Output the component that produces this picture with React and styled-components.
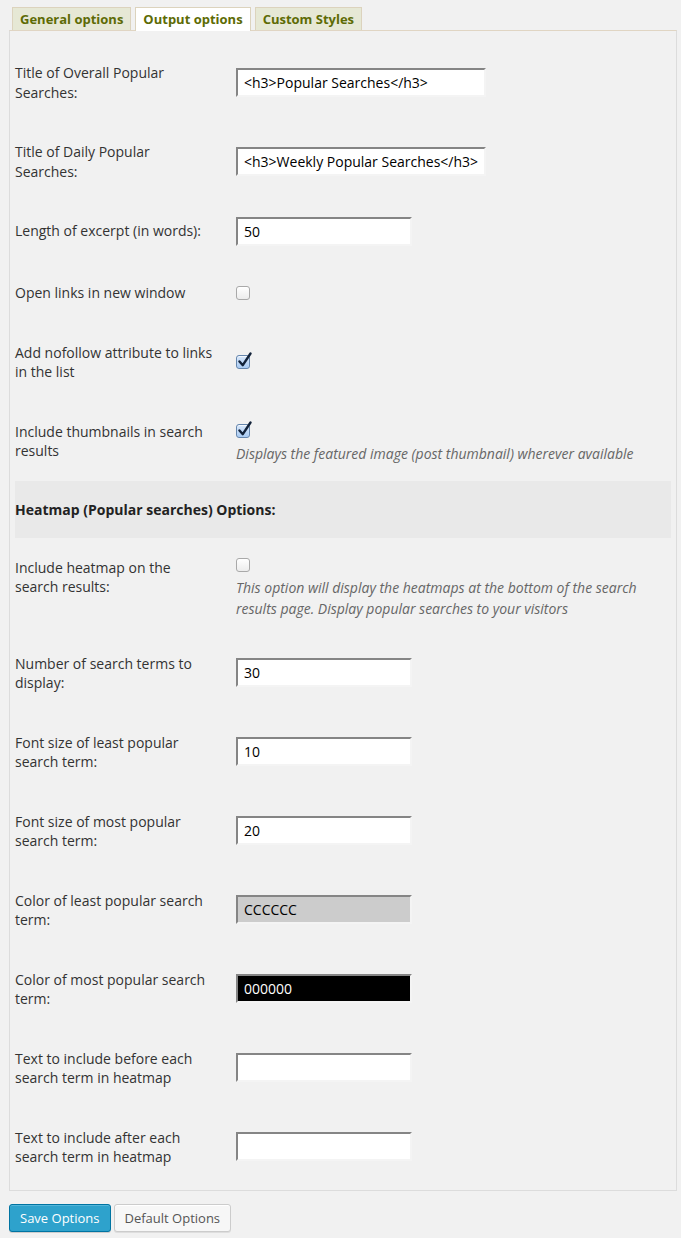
import React from 'react';
import styled, {createGlobalStyle} from 'styled-components';

const GlobalStyle = createGlobalStyle`
  body {
    margin: 0;
    background: #f1f1f1;
    font-family: "Open Sans", "Liberation Sans", sans-serif;
    font-size: 14px;
    color: #333;
  }
`;

const Page = styled.div`
  padding: 7px 4px 6px 9px;
`;

const TabBar = styled.div`
  display: flex;
  gap: 4px;
  padding-left: 3px;
  height: 23px;
  position: relative;
  z-index: 1;
`;

const Tab = styled.div`
  height: ${({$active}) => ($active ? 23 : 22)}px;
  line-height: 22px;
  padding: 0 7px;
  border: 1px solid #dcd3bd;
  border-bottom: none;
  background: ${({$active}) => ($active ? '#fff' : '#e6e8d5')};
  color: #5d6b05;
  font-weight: 700;
  font-size: 13px;
  white-space: nowrap;
`;

const Panel = styled.div`
  border: 1px solid #dcdcdc;
  border-top-color: #e0d5c3;
  padding: 12px 5px 3px;
  background: #f1f1f1;
`;

const FormTable = styled.table`
  width: 100%;
  border-collapse: collapse;
`;

const Label = styled.th`
  width: 200px;
  padding: 20px 10px 20px 0;
  text-align: left;
  vertical-align: top;
  font-weight: 400;
  font-size: 14px;
  line-height: 19.5px;
  color: #333;
`;

const Field = styled.td`
  padding: 15px 10px 15px 11px;
  vertical-align: middle;
`;

const SectionHead = styled.th`
  padding: 20px 0;
  text-align: left;
  background: #e9e9e9;
  font-weight: 700;
  font-size: 14px;
  line-height: 17px;
  color: #222;
`;

const TextInput = styled.input`
  display: block;
  box-sizing: border-box;
  width: ${({$wide}) => ($wide ? 250 : 176)}px;
  height: 29px;
  margin: 1px 0 2px;
  padding: 0 6px;
  border: 2px solid #f4f4f4;
  border-top-color: #858585;
  border-left-color: #858585;
  background: ${({$bg}) => $bg || '#fff'};
  color: ${({$fg}) => $fg || '#000'};
  font-family: "Open Sans", "Liberation Sans", sans-serif;
  font-size: 14px;
  outline: none;
`;

const CheckLine = styled.div`
  height: 24px;
  display: flex;
  align-items: center;
`;

const Box = styled.span`
  position: relative;
  display: inline-block;
  box-sizing: border-box;
  width: 14px;
  height: 14px;
  border-radius: 3px;
  border: 1px solid ${({$checked}) => ($checked ? '#6586ad' : '#a9a9a9')};
  background: ${({$checked}) =>
    $checked
      ? 'linear-gradient(#d6e6fa, #a9cbf3)'
      : 'linear-gradient(#ffffff, #ececec)'};
  box-shadow: inset 0 1px 1px rgba(255, 255, 255, 0.8);
`;

const Tick = styled.svg`
  position: absolute;
  left: 0;
  top: -4px;
  width: 15px;
  height: 16px;
`;

const Desc = styled.div`
  font-style: italic;
  color: #666;
  font-size: 14px;
  line-height: 21px;
  max-width: 420px;
`;

const Actions = styled.div`
  display: flex;
  gap: 3px;
  margin-top: 13px;
`;

const Button = styled.button`
  height: 28px;
  padding: 0 10px;
  border-radius: 3px;
  font-family: "Open Sans", "Liberation Sans", sans-serif;
  font-size: 13px;
  line-height: 26px;
  cursor: pointer;
  border: 1px solid ${({$primary}) => ($primary ? '#0074a2' : '#cccccc')};
  background: ${({$primary}) => ($primary ? '#2ea2cc' : '#f7f7f7')};
  color: ${({$primary}) => ($primary ? '#fff' : '#555')};
  box-shadow: ${({$primary}) =>
    $primary
      ? 'inset 0 1px 0 rgba(120, 200, 230, 0.5), 0 1px 0 rgba(0, 0, 0, 0.15)'
      : 'inset 0 1px 0 #fff, 0 1px 0 rgba(0, 0, 0, 0.08)'};
`;

const Checkbox = ({checked}) => (
  <CheckLine>
    <Box $checked={checked}>
      {checked && (
        <Tick viewBox="0 0 15 16">
          <path
            d="M2.5 9.5 L5.8 13.2 L13.5 1.5"
            fill="none"
            stroke="#13233a"
            strokeWidth="2.4"
            strokeLinecap="round"
            strokeLinejoin="round"
          />
        </Tick>
      )}
    </Box>
  </CheckLine>
);

const rowsTop = [
  {label: 'Title of Overall Popular Searches:', input: '<h3>Popular Searches</h3>', wide: true},
  {label: 'Title of Daily Popular Searches:', input: '<h3>Weekly Popular Searches</h3>', wide: true},
  {label: 'Length of excerpt (in words):', input: '50'},
  {label: 'Open links in new window', check: false},
  {label: 'Add nofollow attribute to links in the list', check: true},
  {
    label: 'Include thumbnails in search results',
    check: true,
    desc: 'Displays the featured image (post thumbnail) wherever available',
  },
];

const rowsHeatmap = [
  {
    label: 'Include heatmap on the search results:',
    check: false,
    desc: 'This option will display the heatmaps at the bottom of the search results page. Display popular searches to your visitors',
  },
  {label: 'Number of search terms to display:', input: '30'},
  {label: 'Font size of least popular search term:', input: '10'},
  {label: 'Font size of most popular search term:', input: '20'},
  {label: 'Color of least popular search term:', input: 'CCCCCC', bg: '#cccccc'},
  {label: 'Color of most popular search term:', input: '000000', bg: '#000000', fg: '#ffffff'},
  {label: 'Text to include before each search term in heatmap', input: ''},
  {label: 'Text to include after each search term in heatmap', input: ''},
];

const OptionRow = ({row}) => (
  <tr>
    <Label scope="row">{row.label}</Label>
    <Field>
      {row.check !== undefined ? (
        <>
          <Checkbox checked={row.check} />
          {row.desc && <Desc>{row.desc}</Desc>}
        </>
      ) : (
        <TextInput
          type="text"
          defaultValue={row.input}
          $wide={row.wide}
          $bg={row.bg}
          $fg={row.fg}
        />
      )}
    </Field>
  </tr>
);

export default function App() {
  return (
    <Page>
      <GlobalStyle />
      <TabBar>
        <Tab>General options</Tab>
        <Tab $active>Output options</Tab>
        <Tab>Custom Styles</Tab>
      </TabBar>
      <Panel>
        <FormTable>
          <tbody>
            {rowsTop.map((row) => (
              <OptionRow key={row.label} row={row} />
            ))}
            <tr>
              <SectionHead colSpan={2}>Heatmap (Popular searches) Options:</SectionHead>
            </tr>
            {rowsHeatmap.map((row) => (
              <OptionRow key={row.label} row={row} />
            ))}
          </tbody>
        </FormTable>
      </Panel>
      <Actions>
        <Button $primary>Save Options</Button>
        <Button>Default Options</Button>
      </Actions>
    </Page>
  );
}
